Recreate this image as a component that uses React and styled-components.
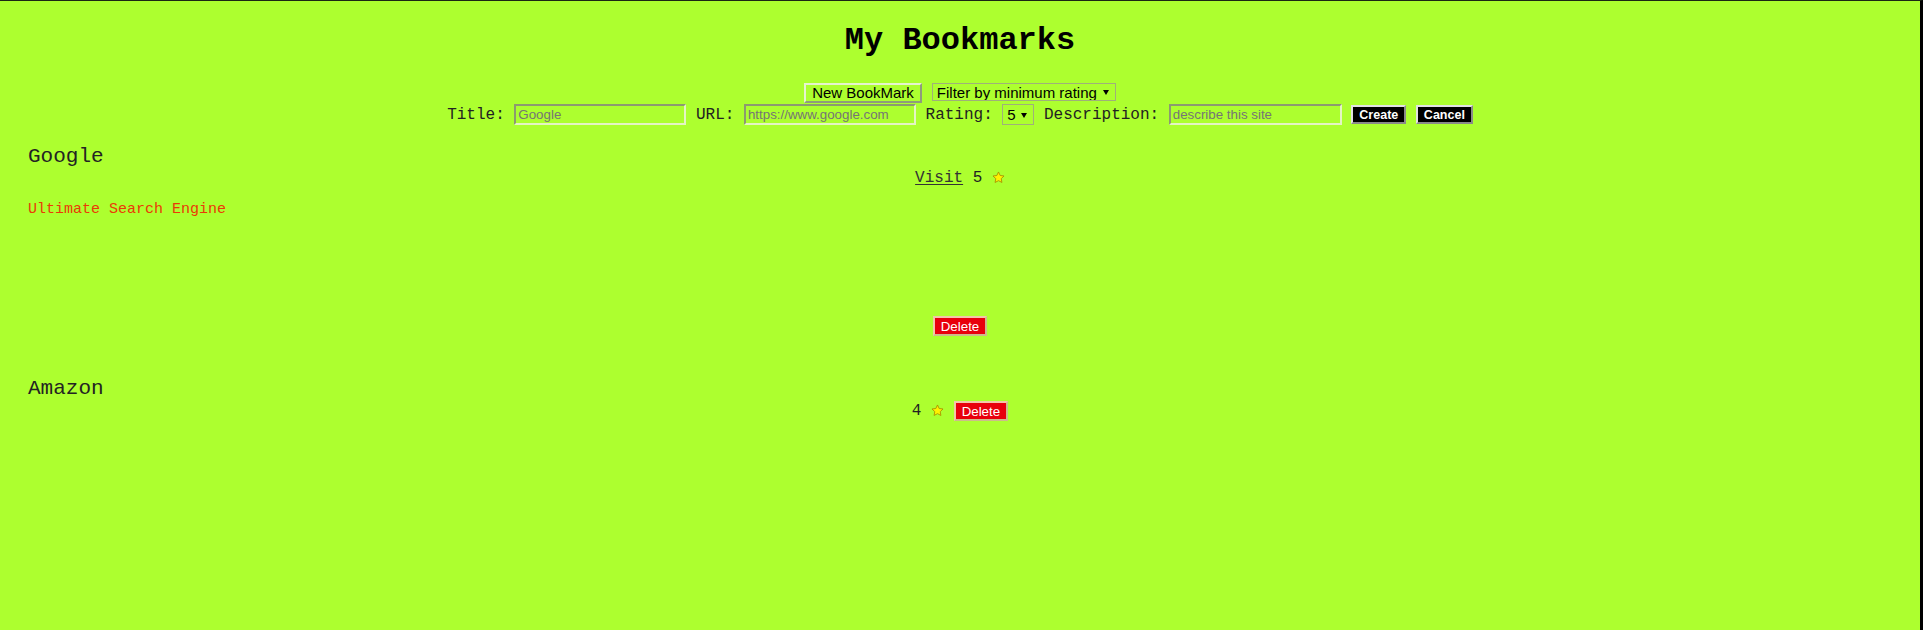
import React from 'react';
import styled, { createGlobalStyle } from 'styled-components';

const GlobalStyle = createGlobalStyle`
  html, body { margin: 0; padding: 0; background: #adff2f; }
  body { font-family: "Liberation Mono", "Courier New", monospace; color: #111; }
`;

const Page = styled.div`
  box-sizing: border-box;
  min-height: 100vh;
  background: #adff2f;
  border-top: 1px solid #1c2614;
  border-right: 3px solid #000;
  padding: 0 28px 40px;
`;

const Heading = styled.h1`
  margin: 22px 0 0;
  text-align: center;
  font-size: 32px;
  line-height: 36px;
  font-weight: bold;
  color: #000;
`;

const Toolbar = styled.div`
  display: flex;
  justify-content: center;
  align-items: flex-start;
  gap: 10px;
  margin-top: 24px;
`;

const PlainButton = styled.button`
  box-sizing: border-box;
  height: 20px;
  padding: 0 6px;
  margin: 0;
  font-family: "Liberation Sans", Arial, sans-serif;
  font-size: 15px;
  line-height: 16px;
  color: #000;
  background: transparent;
  border-style: solid;
  border-width: 2px;
  border-color: #e6f3cf #8f9c7c #8f9c7c #e6f3cf;
  cursor: pointer;
`;

const SelectWrap = styled.span`
  position: relative;
  display: inline-flex;
  &::after {
    content: "";
    position: absolute;
    right: 7px;
    top: 50%;
    margin-top: -2px;
    border-left: 3px solid transparent;
    border-right: 3px solid transparent;
    border-top: 5px solid #000;
    pointer-events: none;
  }
`;

const Select = styled.select`
  appearance: none;
  -webkit-appearance: none;
  box-sizing: border-box;
  height: ${(p) => p.$h}px;
  margin: 0;
  padding: 0 17px 0 4px;
  font-family: "Liberation Sans", Arial, sans-serif;
  font-size: 15px;
  color: #000;
  background: transparent;
  border: 1px solid #9fb07a;
  border-radius: 0;
  outline: none;
`;

const FormRow = styled.div`
  display: flex;
  justify-content: center;
  align-items: center;
  gap: 9.6px;
  height: 21px;
  margin-top: 1px;
`;

const Label = styled.label`
  font-size: 16px;
  line-height: 18px;
  color: #222;
  white-space: pre;
`;

const TextInput = styled.input`
  box-sizing: border-box;
  width: ${(p) => p.$w}px;
  height: 21px;
  margin: 0;
  padding: 1px 2px;
  font-family: "Liberation Sans", Arial, sans-serif;
  font-size: 13.33px;
  color: #000;
  background: transparent;
  border-style: solid;
  border-width: 2px;
  border-color: #8c9a70 #e4f4c4 #e4f4c4 #8c9a70;
  outline: none;
  &::placeholder { color: #757575; }
`;

const DarkButton = styled.button`
  box-sizing: border-box;
  height: 19px;
  padding: 0 6px;
  margin: 0;
  font-family: "Liberation Sans", Arial, sans-serif;
  font-size: 12.5px;
  font-weight: bold;
  line-height: 14px;
  color: #fff;
  background: #000;
  border-style: solid;
  border-width: 2px;
  border-color: #e2e2e2 #8a8a8a #8a8a8a #e2e2e2;
  cursor: pointer;
`;

const List = styled.div`
  display: flex;
  flex-direction: column;
  gap: 41px;
  margin-top: 20px;
`;

const Card = styled.div`
  display: flex;
  flex-direction: column;
`;

const CardTitle = styled.h2`
  margin: 0;
  font-size: 21px;
  line-height: 24px;
  font-weight: normal;
  color: #232323;
`;

const CenterRow = styled.div`
  display: flex;
  justify-content: center;
  align-items: center;
  gap: 9.6px;
  min-height: 18px;
  margin-top: ${(p) => p.$top || 0}px;
  font-size: 16px;
  line-height: 18px;
  color: #222;
`;

const VisitLink = styled.a`
  color: #333;
  text-decoration: underline;
  text-underline-offset: 2px;
`;

const Description = styled.p`
  margin: 14px 0 0;
  font-size: 15px;
  line-height: 17px;
  color: #ea3a06;
`;

const DeleteButton = styled.button`
  box-sizing: border-box;
  height: 20px;
  padding: 0 6px;
  margin: 0;
  font-family: "Liberation Sans", Arial, sans-serif;
  font-size: 13.33px;
  line-height: 15px;
  color: #fff;
  background: #e8000c;
  border-style: solid;
  border-width: 2px;
  border-color: #f3c7a8 #cdbb8c #cdbb8c #f3c7a8;
  cursor: pointer;
`;

const StarIcon = styled.svg`
  width: 13px;
  height: 13px;
  display: block;
  margin-top: -2px;
`;

function Star() {
  return (
    <StarIcon viewBox="0 0 24 24" aria-hidden="true">
      <polygon
        points="12,1.8 15.1,8.3 22.2,9.2 17,14.1 18.3,21.2 12,17.8 5.7,21.2 7,14.1 1.8,9.2 8.9,8.3"
        fill="#fff200"
        stroke="#a88f00"
        strokeWidth="1.6"
        strokeLinejoin="round"
      />
    </StarIcon>
  );
}

const bookmarks = [
  {
    id: 1,
    title: 'Google',
    url: 'https://www.google.com',
    rating: 5,
    description: 'Ultimate Search Engine',
  },
  { id: 2, title: 'Amazon', url: '', rating: 4, description: '' },
];

export default function App() {
  return (
    <>
      <GlobalStyle />
      <Page>
        <Heading>My Bookmarks</Heading>
        <Toolbar>
          <PlainButton>New BookMark</PlainButton>
          <SelectWrap>
            <Select $h={18} defaultValue="">
              <option value="">Filter by minimum rating</option>
              <option value="1">1</option>
              <option value="2">2</option>
              <option value="3">3</option>
              <option value="4">4</option>
              <option value="5">5</option>
            </Select>
          </SelectWrap>
        </Toolbar>
        <FormRow>
          <Label htmlFor="title">Title:</Label>
          <TextInput id="title" $w={172} placeholder="Google" />
          <Label htmlFor="url">URL:</Label>
          <TextInput id="url" $w={172} placeholder="https://www.google.com" />
          <Label htmlFor="rating">Rating:</Label>
          <SelectWrap>
            <Select id="rating" $h={21} defaultValue="5">
              <option value="1">1</option>
              <option value="2">2</option>
              <option value="3">3</option>
              <option value="4">4</option>
              <option value="5">5</option>
            </Select>
          </SelectWrap>
          <Label htmlFor="desc">Description:</Label>
          <TextInput id="desc" $w={173} placeholder="describe this site" />
          <DarkButton>Create</DarkButton>
          <DarkButton>Cancel</DarkButton>
        </FormRow>
        <List>
          {bookmarks.map((b) =>
            b.description ? (
              <Card key={b.id}>
                <CardTitle>{b.title}</CardTitle>
                <CenterRow>
                  <VisitLink href={b.url}>Visit</VisitLink>
                  <span>{b.rating}</span>
                  <Star />
                </CenterRow>
                <Description>{b.description}</Description>
                <CenterRow $top={98}>
                  <DeleteButton>Delete</DeleteButton>
                </CenterRow>
              </Card>
            ) : (
              <Card key={b.id}>
                <CardTitle>{b.title}</CardTitle>
                <CenterRow>
                  <span>{b.rating}</span>
                  <Star />
                  <DeleteButton>Delete</DeleteButton>
                </CenterRow>
              </Card>
            )
          )}
        </List>
      </Page>
    </>
  );
}
